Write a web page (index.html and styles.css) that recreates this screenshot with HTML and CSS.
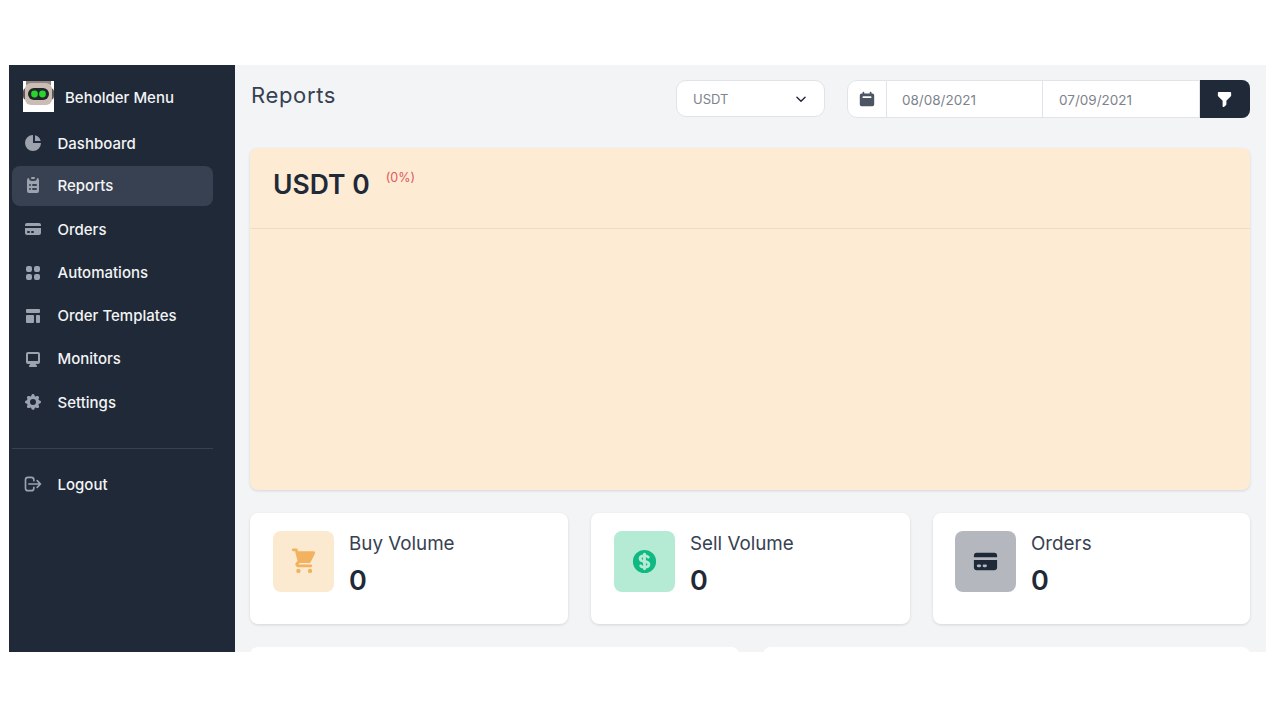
FILE: index.html
```html
<!DOCTYPE html>
<html lang="en">
<head>
<meta charset="utf-8">
<title>Reports</title>
<link rel="stylesheet" href="styles.css">
</head>
<body>
<div class="screen">
  <aside class="sidebar">
    <div class="brand">
      <svg class="logo" viewBox="0 0 31 31"><rect width="31" height="31" fill="#fff"/><path d="M3 0h25v4H3z" fill="#8f8680"/><rect x="0" y="7" width="31" height="12" rx="4" fill="#5f5750"/><rect x="2" y="2" width="27" height="22" rx="6" fill="#cbbdb4"/><rect x="5" y="7" width="21" height="12" rx="6" fill="#20262b"/><circle cx="11.5" cy="13" r="3.4" fill="#27d62c"/><circle cx="19.5" cy="13" r="3.4" fill="#27d62c"/></svg>
      <span class="brand-name">Beholder Menu</span>
    </div>
    <nav class="nav">
      <a class="nav-item"><svg class="nav-icon" viewBox="0 0 20 20"><path d="M2 10a8 8 0 018-8v8h8a8 8 0 11-16 0z"/><path d="M12 2.252A8.014 8.014 0 0117.748 8H12V2.252z"/></svg><span>Dashboard</span></a>
      <a class="nav-item active"><svg class="nav-icon" viewBox="0 0 20 20"><path d="M9 2a1 1 0 000 2h2a1 1 0 100-2H9z"/><path fill-rule="evenodd" d="M4 5a2 2 0 012-2 3 3 0 003 3h2a3 3 0 003-3 2 2 0 012 2v11a2 2 0 01-2 2H6a2 2 0 01-2-2V5zm3 4a1 1 0 000 2h.01a1 1 0 100-2H7zm3 0a1 1 0 000 2h3a1 1 0 100-2h-3zm-3 4a1 1 0 100 2h.01a1 1 0 100-2H7zm3 0a1 1 0 100 2h3a1 1 0 100-2h-3z"/></svg><span>Reports</span></a>
      <a class="nav-item"><svg class="nav-icon" viewBox="0 0 20 20"><path d="M4 4a2 2 0 00-2 2v1h16V6a2 2 0 00-2-2H4z"/><path fill-rule="evenodd" d="M18 9H2v5a2 2 0 002 2h12a2 2 0 002-2V9zM4 13a1 1 0 011-1h1a1 1 0 110 2H5a1 1 0 01-1-1zm5-1a1 1 0 100 2h1a1 1 0 100-2H9z"/></svg><span>Orders</span></a>
      <a class="nav-item"><svg class="nav-icon" viewBox="0 0 20 20"><path d="M5 3a2 2 0 00-2 2v2a2 2 0 002 2h2a2 2 0 002-2V5a2 2 0 00-2-2H5zM5 11a2 2 0 00-2 2v2a2 2 0 002 2h2a2 2 0 002-2v-2a2 2 0 00-2-2H5zM11 5a2 2 0 012-2h2a2 2 0 012 2v2a2 2 0 01-2 2h-2a2 2 0 01-2-2V5zM11 13a2 2 0 012-2h2a2 2 0 012 2v2a2 2 0 01-2 2h-2a2 2 0 01-2-2v-2z"/></svg><span>Automations</span></a>
      <a class="nav-item"><svg class="nav-icon" viewBox="0 0 20 20"><path d="M3 4a1 1 0 011-1h12a1 1 0 011 1v2a1 1 0 01-1 1H4a1 1 0 01-1-1V4zM3 10a1 1 0 011-1h6a1 1 0 011 1v6a1 1 0 01-1 1H4a1 1 0 01-1-1v-6zM14 9a1 1 0 00-1 1v6a1 1 0 001 1h2a1 1 0 001-1v-6a1 1 0 00-1-1h-2z"/></svg><span>Order Templates</span></a>
      <a class="nav-item"><svg class="nav-icon" viewBox="0 0 20 20"><path fill-rule="evenodd" d="M3 5a2 2 0 012-2h10a2 2 0 012 2v8a2 2 0 01-2 2h-2.22l.123.489.804.804A1 1 0 0113 18H7a1 1 0 01-.707-1.707l.804-.804L7.22 15H5a2 2 0 01-2-2V5zm5.771 7H5V5h10v7H8.771z"/></svg><span>Monitors</span></a>
      <a class="nav-item"><svg class="nav-icon" viewBox="0 0 20 20"><path fill-rule="evenodd" d="M11.49 3.17c-.38-1.56-2.6-1.56-2.98 0a1.532 1.532 0 01-2.286.948c-1.372-.836-2.942.734-2.106 2.106.54.886.061 2.042-.947 2.287-1.561.379-1.561 2.6 0 2.978a1.532 1.532 0 01.947 2.287c-.836 1.372.734 2.942 2.106 2.106a1.532 1.532 0 012.287.947c.379 1.561 2.6 1.561 2.978 0a1.533 1.533 0 012.287-.947c1.372.836 2.942-.734 2.106-2.106a1.533 1.533 0 01.947-2.287c1.561-.379 1.561-2.6 0-2.978a1.532 1.532 0 01-.947-2.287c.836-1.372-.734-2.942-2.106-2.106a1.532 1.532 0 01-2.287-.947zM10 13a3 3 0 100-6 3 3 0 000 6z"/></svg><span>Settings</span></a>
    </nav>
    <div class="divider"></div>
    <a class="nav-item logout"><svg class="nav-icon outline" viewBox="0 0 24 24"><path d="M17 16l4-4m0 0l-4-4m4 4H7m6 4v1a3 3 0 01-3 3H6a3 3 0 01-3-3V7a3 3 0 013-3h4a3 3 0 013 3v1"/></svg><span>Logout</span></a>
  </aside>
  <main class="main">
    <header class="topbar">
      <h1 class="page-title">Reports</h1>
      <div class="select"><span>USDT</span><svg class="chevron" viewBox="0 0 24 24"><path d="M19 9l-7 7-7-7"/></svg></div>
      <div class="dates">
        <span class="date-addon"><svg class="cal" viewBox="0 0 20 20"><path fill-rule="evenodd" d="M6 2a1 1 0 00-1 1v1H4a2 2 0 00-2 2v10a2 2 0 002 2h12a2 2 0 002-2V6a2 2 0 00-2-2h-1V3a1 1 0 10-2 0v1H7V3a1 1 0 00-1-1zm0 5a1 1 0 000 2h8a1 1 0 100-2H6z"/></svg></span>
        <span class="date-field">08/08/2021</span>
        <span class="date-field">07/09/2021</span>
        <span class="filter-btn"><svg viewBox="0 0 20 20"><path d="M3 3a1 1 0 011-1h12a1 1 0 011 1v3a1 1 0 01-.293.707L12 11.414V15a1 1 0 01-.293.707l-2 2A1 1 0 018 17v-5.586L3.293 6.707A1 1 0 013 6V3z"/></svg></span>
      </div>
    </header>
    <section class="hero">
      <div class="hero-head">
        <h2 class="hero-title">USDT 0</h2>
        <span class="hero-pct">(0%)</span>
      </div>
    </section>
    <section class="stats">
      <div class="stat">
        <div class="stat-icon buy"><svg viewBox="0 0 20 20"><path d="M3 1a1 1 0 000 2h1.22l.305 1.222a.997.997 0 00.01.042l1.358 5.43-.893.892C3.74 11.846 4.632 14 6.414 14H15a1 1 0 000-2H6.414l1-1H14a1 1 0 00.894-.553l3-6A1 1 0 0017 3H6.28l-.31-1.243A1 1 0 005 1H3zM16 16.5a1.5 1.5 0 11-3 0 1.5 1.5 0 013 0zM6.5 18a1.5 1.5 0 100-3 1.5 1.5 0 000 3z"/></svg></div>
        <div><div class="stat-label">Buy Volume</div><div class="stat-value">0</div></div>
      </div>
      <div class="stat">
        <div class="stat-icon sell"><svg viewBox="0 0 20 20"><path d="M8.433 7.418c.155-.103.346-.196.567-.267v1.698a2.305 2.305 0 01-.567-.267C8.07 8.34 8 8.114 8 8c0-.114.07-.34.433-.582zM11 12.849v-1.698c.22.071.412.164.567.267.364.243.433.468.433.582 0 .114-.07.34-.433.582a2.305 2.305 0 01-.567.267z"/><path fill-rule="evenodd" d="M10 18a8 8 0 100-16 8 8 0 000 16zm1-13a1 1 0 10-2 0v.092a4.535 4.535 0 00-1.676.662C6.602 6.234 6 7.009 6 8c0 .99.602 1.765 1.324 2.246.48.32 1.054.545 1.676.662v1.941c-.391-.127-.68-.317-.843-.504a1 1 0 10-1.51 1.31c.562.649 1.413 1.076 2.353 1.253V15a1 1 0 102 0v-.092a4.535 4.535 0 001.676-.662C13.398 13.766 14 12.991 14 12c0-.99-.602-1.765-1.324-2.246A4.535 4.535 0 0011 9.092V7.151c.391.127.68.317.843.504a1 1 0 101.511-1.31c-.563-.649-1.413-1.076-2.354-1.253V5z"/></svg></div>
        <div><div class="stat-label">Sell Volume</div><div class="stat-value">0</div></div>
      </div>
      <div class="stat third">
        <div class="stat-icon ord"><svg viewBox="0 0 20 20"><path d="M4 4a2 2 0 00-2 2v1h16V6a2 2 0 00-2-2H4z"/><path fill-rule="evenodd" d="M18 9H2v5a2 2 0 002 2h12a2 2 0 002-2V9zM4 13a1 1 0 011-1h1a1 1 0 110 2H5a1 1 0 01-1-1zm5-1a1 1 0 100 2h1a1 1 0 100-2H9z"/></svg></div>
        <div><div class="stat-label">Orders</div><div class="stat-value">0</div></div>
      </div>
    </section>
    <section class="lower">
      <div class="lower-card"></div>
      <div class="lower-card"></div>
    </section>
  </main>
</div>
</body>
</html>
```
FILE: styles.css
```css
* { box-sizing: border-box; }
html, body { margin: 0; padding: 0; background: #fff; }
body { font-family: Inter, "Liberation Sans", sans-serif; color: #1f2937; }

.screen {
  display: flex;
  width: 1257px;
  height: 587px;
  margin: 65px 0 0 9px;
  overflow: hidden;
  background: #f3f4f6;
}

.sidebar {
  flex: 0 0 226px;
  padding: 16px 22px 0 3px;
  background: #1f2937;
  color: #f3f4f6;
}
.brand { display: flex; align-items: center; gap: 11px; height: 31px; padding-left: 11px; margin-bottom: 11px; }
.logo { width: 31px; height: 31px; flex: none; }
.brand-name { position: relative; top: 1px; font-size: 15px; font-weight: 500; }

.nav { display: flex; flex-direction: column; gap: 3.2px; }
.nav-item {
  display: flex;
  align-items: center;
  gap: 14.5px;
  height: 40px;
  padding: 0 11px;
  border-radius: 8px;
  font-size: 15px;
  font-weight: 500;
}
.nav-item.active { padding-bottom: 2px; background: #374151; }
.nav-icon { width: 20px; height: 20px; flex: none; fill: #9ca3af; }
.nav-icon.outline { fill: none; stroke: #9ca3af; stroke-width: 2; stroke-linecap: round; stroke-linejoin: round; }
.divider { height: 1px; margin-top: 26px; background: #374151; }
.logout { margin-top: 15px; }

.main { flex: 1; min-width: 0; padding: 15px 16px 0 15px; }

.topbar { display: flex; align-items: flex-start; height: 68px; }
.page-title { flex: 1; margin: 0; padding-left: 1px; font-size: 22px; font-weight: 400; line-height: 30px; letter-spacing: .65px; color: #374151; }

.select {
  display: flex;
  align-items: center;
  justify-content: space-between;
  width: 149px;
  height: 37px;
  margin-right: 22px;
  padding: 0 16px;
  background: #fff;
  border: 1px solid #e0e3e8;
  border-radius: 10px;
  font-size: 13px;
  color: #7d838c;
}
.chevron { width: 14px; height: 14px; fill: none; stroke: #1f2937; stroke-width: 2.4; stroke-linecap: round; stroke-linejoin: round; }

.dates {
  display: flex;
  width: 403px;
  height: 38px;
  background: #fff;
  border-radius: 10px;
  font-size: 13.5px;
  color: #7d838c;
}
.date-addon {
  display: flex;
  align-items: center;
  justify-content: center;
  width: 40px;
  border: 1px solid #e0e3e8;
  border-radius: 10px 0 0 10px;
}
.cal { width: 18px; height: 18px; fill: #4b5563; margin: -1px 0 0 -1px; }
.date-field {
  display: flex;
  align-items: center;
  width: 156px;
  padding-left: 15px;
  padding-top: 1px;
  border: 1px solid #e0e3e8;
  border-left: 0;
}
.date-field + .date-field { width: 157px; padding-left: 16px; }
.filter-btn {
  display: flex;
  align-items: center;
  justify-content: center;
  flex: 1;
  padding-right: 2px;
  background: #1f2937;
  border-radius: 0 8px 8px 0;
}
.filter-btn svg { width: 19px; height: 19px; fill: #fff; }

.hero {
  height: 342px;
  background: #fdebd3;
  border-radius: 8px;
  box-shadow: 0 1px 3px rgba(0, 0, 0, .12);
}
.hero-head { display: flex; align-items: flex-start; gap: 16px; height: 81px; padding: 20px 23px 0; border-bottom: 1px solid #ecdcc6; }
.hero-title { margin: 0; font-size: 26.5px; line-height: 32px; font-weight: 600; color: #1f2937; }
.hero-pct { margin-top: 1px; font-size: 12.5px; line-height: 18px; color: #e0575f; }

.stats { display: grid; grid-template-columns: 318px 319px 317px; gap: 23px; margin-top: 23px; }
.stat {
  display: flex;
  gap: 15px;
  height: 111px;
  padding: 18px 23px;
  background: #fff;
  border-radius: 8px;
  box-shadow: 0 1px 3px rgba(0, 0, 0, .12);
}
.stat.third { padding-left: 22px; }
.stat-icon {
  display: flex;
  align-items: center;
  justify-content: center;
  width: 61px;
  height: 61px;
  flex: none;
  border-radius: 8px;
}
.stat-icon svg { width: 29px; height: 29px; }
.stat-icon.buy { background: #fbeacf; fill: #f2b25f; }
.stat-icon.sell { background: #b5ebd5; fill: #10b981; }
.stat-icon.ord { background: #b4b8be; fill: #1f2937; }
.stat-label { font-size: 18.8px; line-height: 26px; color: #374151; }
.stat-value { margin-top: 8px; font-size: 27px; line-height: 32px; font-weight: 600; color: #1f2937; }

.lower { display: grid; grid-template-columns: 489px 487px; gap: 24px; margin-top: 23px; }
.lower-card { height: 120px; background: #fff; border-radius: 8px; }
```
